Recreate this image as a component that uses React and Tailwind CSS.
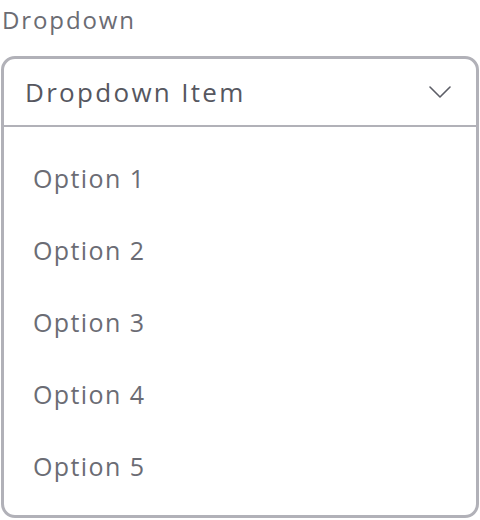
import { useState } from "react";

const options = ["Option 1", "Option 2", "Option 3", "Option 4", "Option 5"];

const Chevron = () => (
  <svg width="22" height="12" viewBox="0 0 22 12" fill="none">
    <path d="M1 1l10 10L21 1" stroke="#5c5d66" strokeWidth="1.6" strokeLinecap="round" strokeLinejoin="round" />
  </svg>
);

export default function App() {
  const [selected] = useState("Dropdown Item");

  return (
    <div className="w-[480px] h-[520px] bg-white font-['Open_Sans',sans-serif] overflow-hidden">
      <div className="pl-[2px] pt-[4px] text-[24px] leading-[32px] tracking-[1.9px] text-[#6b6c73]">
        Dropdown
      </div>
      <div className="mt-[20px] ml-[1px] w-[478px] h-[462px] border-[3px] border-[#b1b1b8] rounded-[14px] overflow-hidden">
        <div className="h-[68px] flex items-center justify-between pl-[21px] pr-[25px] border-b-2 border-[#b1b1b8]">
          <span className="text-[26px] font-medium tracking-[2.3px] text-[#56575f]">{selected}</span>
          <Chevron />
        </div>
        <ul className="pt-[16px]">
          {options.map((o) => (
            <li key={o} className="h-[72px] flex items-center pl-[29px] text-[25px] tracking-[1.4px] text-[#6b6c74]">
              {o}
            </li>
          ))}
        </ul>
      </div>
    </div>
  );
}
